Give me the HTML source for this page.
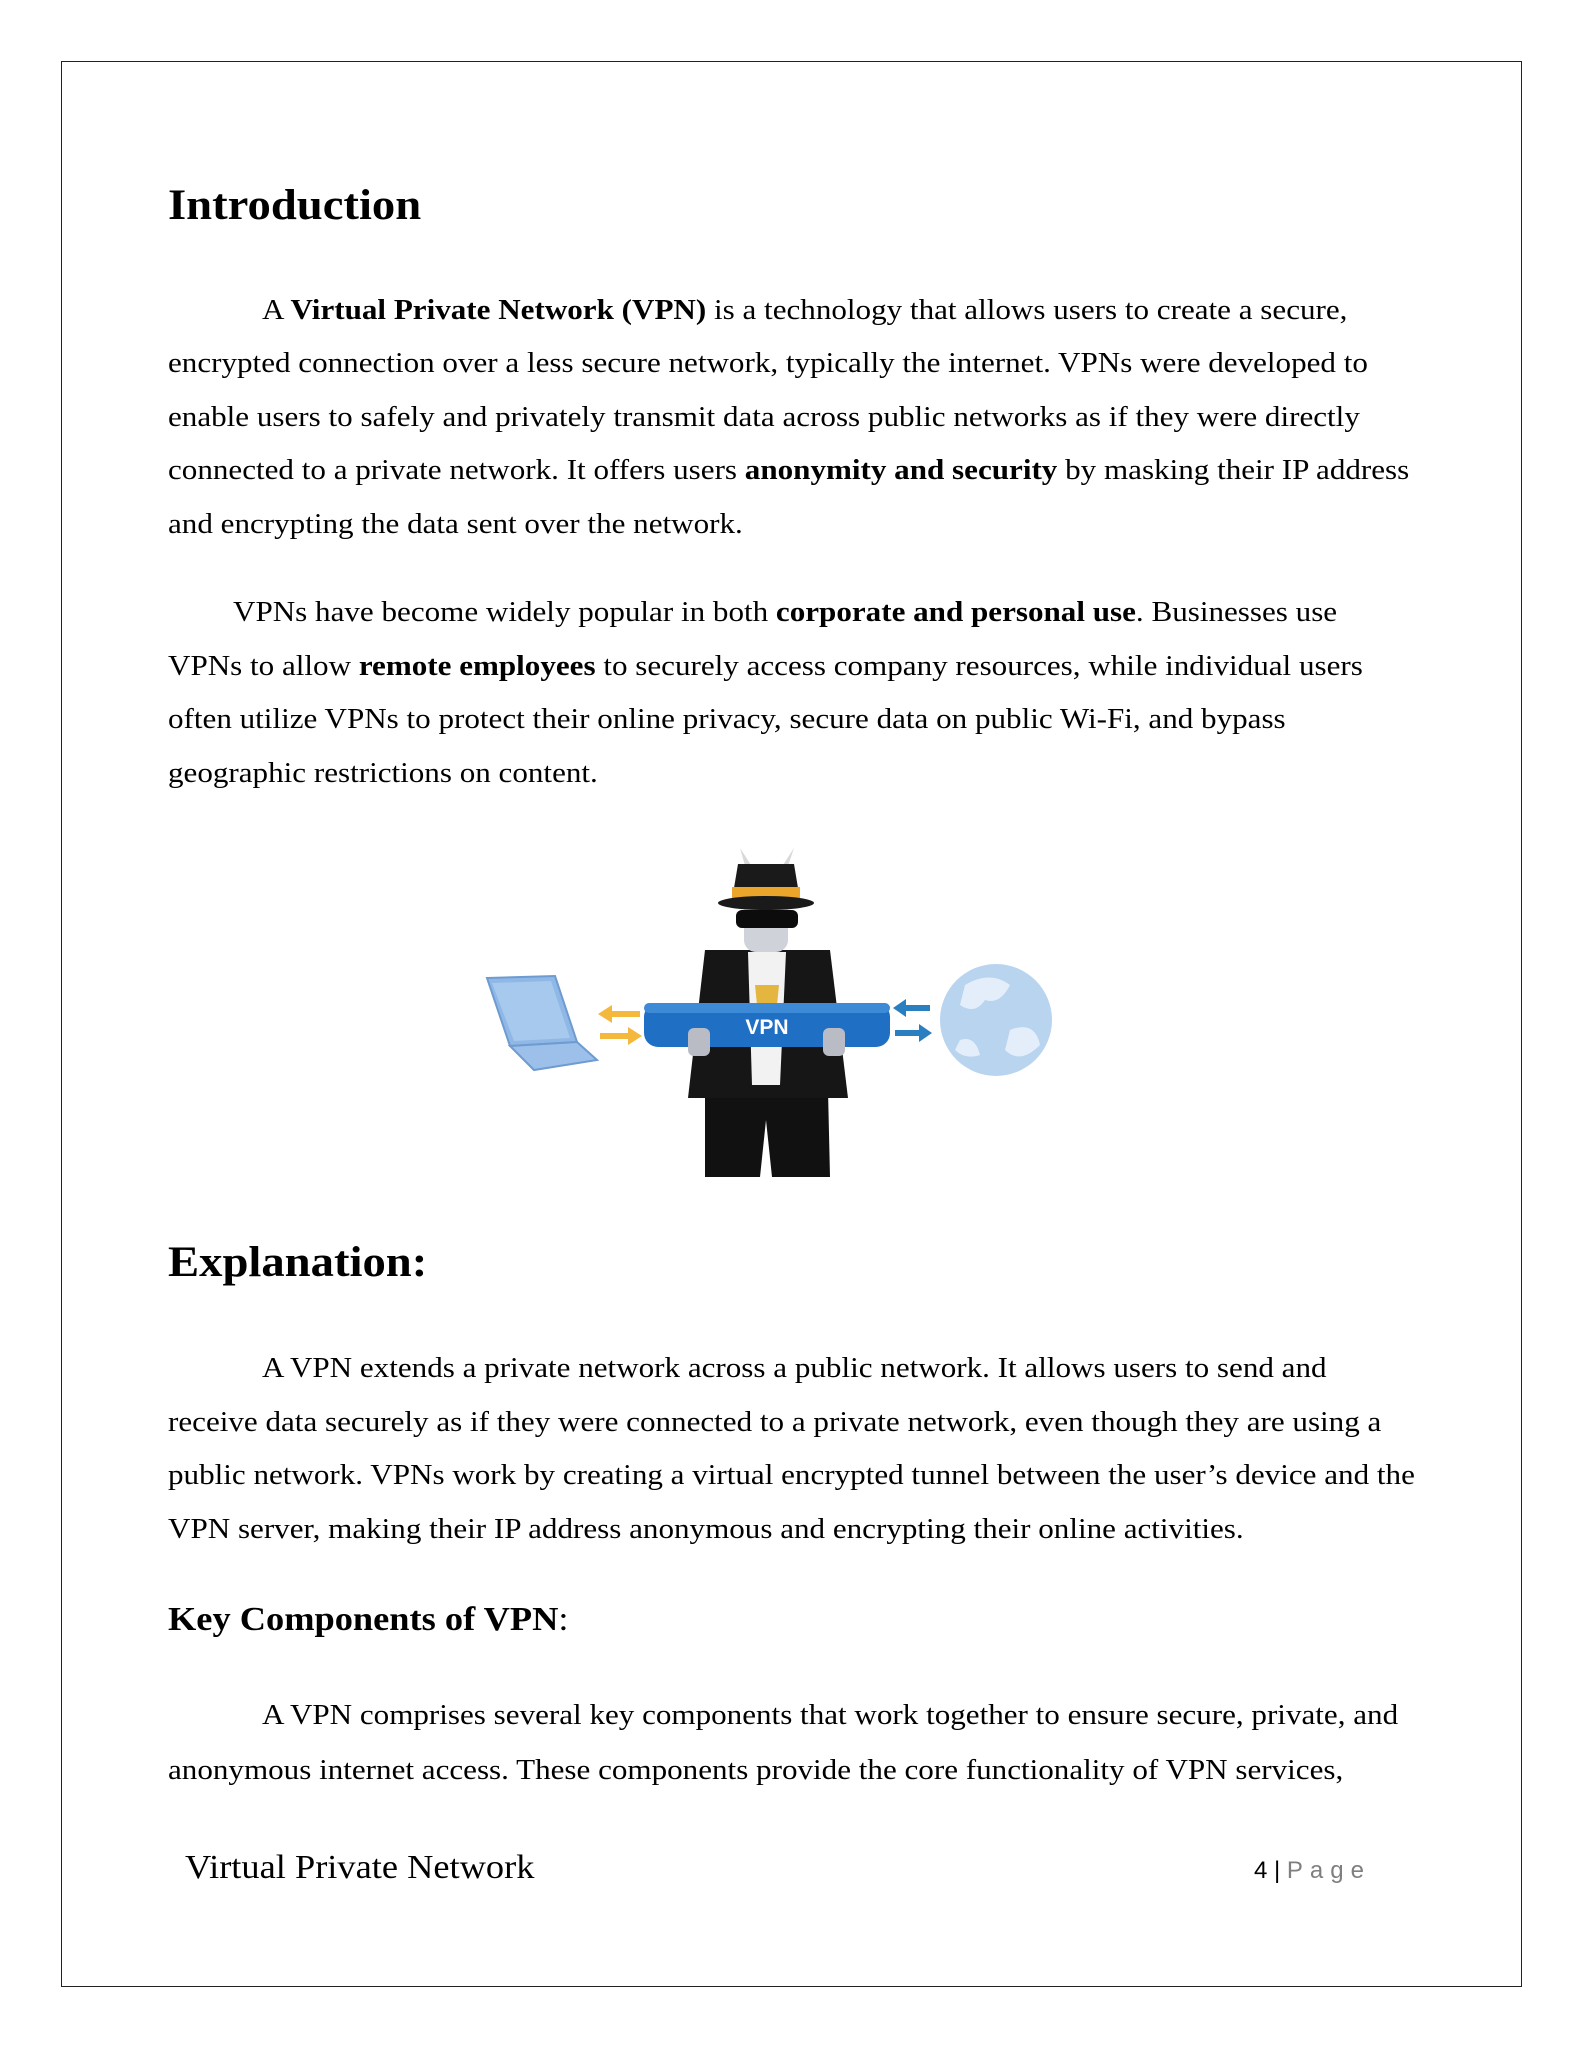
<!DOCTYPE html>
<html><head><meta charset="utf-8"><style>
html,body{margin:0;padding:0;background:#fff;}
body{width:1583px;height:2048px;position:relative;overflow:hidden;font-family:"Liberation Serif","Times New Roman",serif;color:#000;}
.frame{position:absolute;left:61px;top:61px;width:1461px;height:1926px;border:1.5px solid #222;box-sizing:border-box;}
.l{position:absolute;white-space:nowrap;font-size:28px;line-height:1;transform:scaleX(1.11);transform-origin:0 0;}
.h1{position:absolute;white-space:nowrap;font-size:43px;font-weight:bold;line-height:1;transform:scaleX(1.085);transform-origin:0 0;}
.h2{position:absolute;white-space:nowrap;font-size:34px;line-height:1;transform:scaleX(1.07);transform-origin:0 0;}
b{font-weight:bold;}
svg{position:absolute;left:0;top:0;}
</style></head><body>
<div class="frame"></div>

<div class="h1" style="left:168px;top:184px;">Introduction</div>

<div class="l" style="left:262px;top:297px;">A <b>Virtual Private Network (VPN)</b> is a technology that allows users to create a secure,</div>
<div class="l" style="left:168px;top:350px;">encrypted connection over a less secure network, typically the internet. VPNs were developed to</div>
<div class="l" style="left:168px;top:404px;">enable users to safely and privately transmit data across public networks as if they were directly</div>
<div class="l" style="left:168px;top:457px;">connected to a private network. It offers users <b>anonymity and security</b> by masking their IP address</div>
<div class="l" style="left:168px;top:511px;">and encrypting the data sent over the network.</div>

<div class="l" style="left:233px;top:599px;">VPNs have become widely popular in both <b>corporate and personal use</b>. Businesses use</div>
<div class="l" style="left:168px;top:653px;">VPNs to allow <b>remote employees</b> to securely access company resources, while individual users</div>
<div class="l" style="left:168px;top:706px;">often utilize VPNs to protect their online privacy, secure data on public Wi-Fi, and bypass</div>
<div class="l" style="left:168px;top:760px;">geographic restrictions on content.</div>

<svg width="1583" height="2048" viewBox="0 0 1583 2048">
 <polygon points="487,978 555,976 577,1042 510,1046" fill="#8fb8e6" stroke="#6e9bd0" stroke-width="2"/>
 <polygon points="492,983 551,981 570,1038 514,1041" fill="#a7c9ee"/>
 <polygon points="510,1046 577,1042 597,1060 534,1070" fill="#9cc0ea" stroke="#6e9bd0" stroke-width="2"/>
 <path d="M640,1011 L612,1011 L612,1005 L598,1014 L612,1023 L612,1017 L640,1017Z" fill="#f3b83c"/>
 <path d="M600,1033 L628,1033 L628,1027 L642,1036 L628,1045 L628,1039 L600,1039Z" fill="#f3b83c"/>
 <path d="M930,1005 L906,1005 L906,999 L893,1008 L906,1017 L906,1011 L930,1011Z" fill="#2a7fc0"/>
 <path d="M895,1030 L919,1030 L919,1024 L932,1033 L919,1042 L919,1036 L895,1036Z" fill="#2a7fc0"/>
 <circle cx="996" cy="1020" r="56" fill="#b9d4ef"/>
 <path d="M965,985 Q990,970 1010,985 Q1000,1005 985,1000 Q975,1015 960,1005Z M1010,1030 Q1035,1020 1040,1045 Q1020,1065 1005,1050Z M960,1040 Q975,1035 980,1055 Q965,1060 955,1050Z" fill="#e4eefa"/>
 <polygon points="705,1090 828,1090 830,1177 772,1177 766,1120 760,1177 705,1177" fill="#111"/>
 <polygon points="705,950 830,950 848,1098 688,1098" fill="#161616"/>
 <polygon points="748,952 786,952 780,1085 752,1085" fill="#f2f2f2"/>
 <polygon points="755,985 779,985 777,1005 767,1012 757,1005" fill="#e4b640"/>
 <polygon points="740,848 752,890 780,890 794,848 772,882 762,882" fill="#d8d8d8"/>
 <rect x="744" y="898" width="44" height="54" rx="12" fill="#cfd2d8"/>
 <rect x="736" y="910" width="62" height="18" rx="6" fill="#0c0c0c"/>
 <polygon points="738,864 794,864 800,900 732,900" fill="#1a1a1a"/>
 <rect x="732" y="887" width="68" height="11" fill="#e9a62a"/>
 <ellipse cx="766" cy="903" rx="48" ry="7" fill="#1a1a1a"/>
 <rect x="644" y="1003" width="246" height="44" rx="14" fill="#1f6fc4"/>
 <rect x="644" y="1003" width="246" height="10" rx="5" fill="#3d8ad6"/>
 <text x="767" y="1034" text-anchor="middle" font-family="Liberation Sans, sans-serif" font-weight="bold" font-size="21" fill="#fff">VPN</text>
 <rect x="688" y="1028" width="22" height="28" rx="6" fill="#b9bcc4"/>
 <rect x="823" y="1028" width="22" height="28" rx="6" fill="#b9bcc4"/>
</svg>

<div class="h1" style="left:168px;top:1241px;">Explanation:</div>

<div class="l" style="left:262px;top:1355px;">A VPN extends a private network across a public network. It allows users to send and</div>
<div class="l" style="left:168px;top:1409px;">receive data securely as if they were connected to a private network, even though they are using a</div>
<div class="l" style="left:168px;top:1462px;">public network. VPNs work by creating a virtual encrypted tunnel between the user’s device and the</div>
<div class="l" style="left:168px;top:1516px;">VPN server, making their IP address anonymous and encrypting their online activities.</div>

<div class="h2" style="left:168px;top:1603px;"><b>Key Components of VPN</b>:</div>

<div class="l" style="left:262px;top:1702px;">A VPN comprises several key components that work together to ensure secure, private, and</div>
<div class="l" style="left:168px;top:1757px;">anonymous internet access. These components provide the core functionality of VPN services,</div>

<div class="h2" style="left:185px;top:1851px;">Virtual Private Network</div>
<div style="position:absolute;left:1254px;top:1859px;font-family:'Liberation Sans',sans-serif;font-size:24px;white-space:nowrap;line-height:1;">4 | <span style="color:#7f7f7f;letter-spacing:7px;">Page</span></div>
</body></html>
